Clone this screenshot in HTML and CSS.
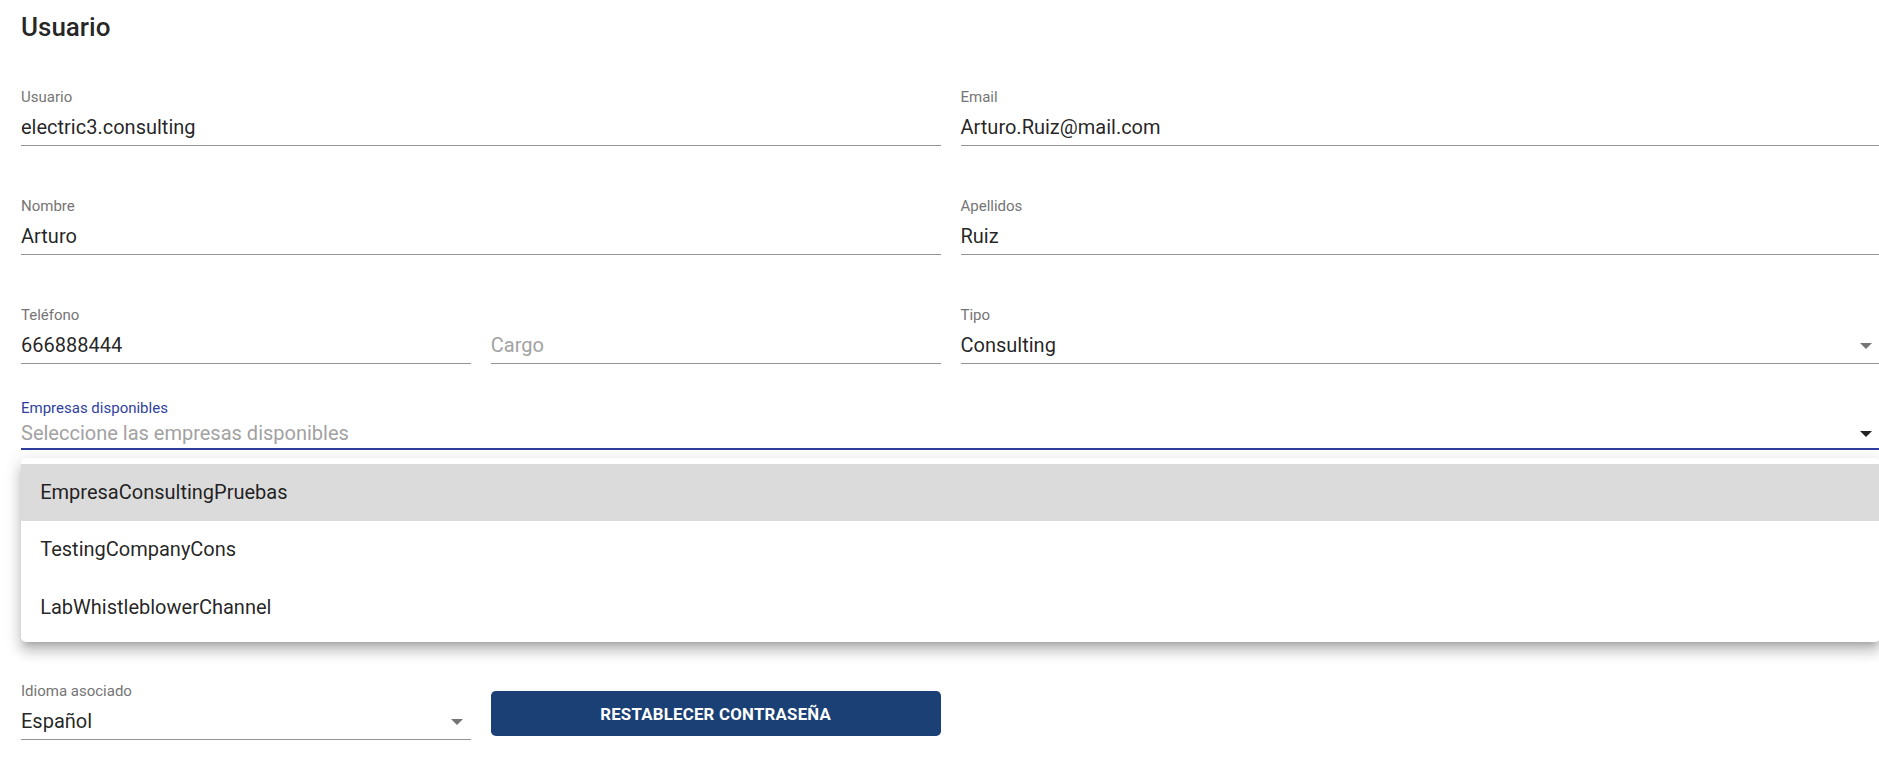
FILE: index.html
```html
<!DOCTYPE html>
<html lang="es">
<head>
<meta charset="UTF-8">
<meta name="viewport" content="width=device-width, initial-scale=1.0">
<title>Usuario</title>
<link rel="stylesheet" href="styles.css">
</head>
<body>
  <div class="page">
    <h2 class="title">Usuario</h2>
    <form class="form">
      <div class="row">
        <div class="field span-2">
          <label class="label">Usuario</label>
          <div class="input">electric3.consulting</div>
        </div>
        <div class="field span-2">
          <label class="label">Email</label>
          <div class="input">Arturo.Ruiz@mail.com</div>
        </div>
      </div>

      <div class="row">
        <div class="field span-2">
          <label class="label">Nombre</label>
          <div class="input">Arturo</div>
        </div>
        <div class="field span-2">
          <label class="label">Apellidos</label>
          <div class="input">Ruiz</div>
        </div>
      </div>

      <div class="row">
        <div class="field">
          <label class="label">Teléfono</label>
          <div class="input">666888444</div>
        </div>
        <div class="field">
          <label class="label">&nbsp;</label>
          <div class="input placeholder">Cargo</div>
        </div>
        <div class="field span-2">
          <label class="label">Tipo</label>
          <div class="input select">Consulting<span class="arrow"></span></div>
        </div>
      </div>

      <div class="row row-empresas">
        <div class="field span-4 focused">
          <label class="label">Empresas disponibles</label>
          <div class="input select placeholder">Seleccione las empresas disponibles<span class="arrow"></span></div>
          <ul class="menu">
            <li class="menu-item selected">EmpresaConsultingPruebas</li>
            <li class="menu-item">TestingCompanyCons</li>
            <li class="menu-item">LabWhistleblowerChannel</li>
          </ul>
        </div>
      </div>

      <div class="row row-last">
        <div class="field">
          <label class="label">Idioma asociado</label>
          <div class="input select">Español<span class="arrow"></span></div>
        </div>
        <button type="button" class="btn">Restablecer contraseña</button>
      </div>
    </form>
  </div>
</body>
</html>
```

FILE: styles.css
```css
html, body {
  margin: 0;
  padding: 0;
  overflow: hidden;
  background-color: #fff;
}
body {
  font-family: Roboto, "Noto Sans", Arial, sans-serif;
  color: rgba(0, 0, 0, 0.87);
}
.page {
  width: 1859px;
  padding: 13px 0 0 21px;
}
.title {
  margin: 0;
  font-size: 26px;
  font-weight: 500;
  line-height: 29px;
}
.form {
  display: flex;
  flex-direction: column;
  margin-top: 48px;
}
.row {
  display: grid;
  grid-template-columns: repeat(4, 1fr);
  column-gap: 20px;
  margin-bottom: 53px;
}
.row-empresas {
  margin-top: -16.5px;
  margin-bottom: 234.5px;
}
.row-last {
  margin-bottom: 0;
  align-items: start;
}
.span-2 {
  grid-column: span 2;
}
.span-4 {
  grid-column: span 4;
}
.field {
  display: flex;
  flex-direction: column;
  position: relative;
}
.label {
  font-size: 15px;
  line-height: 14.4px;
  color: #757575;
}
.input {
  position: relative;
  margin-top: 4px;
  padding: 7.3px 0 6.5px;
  font-size: 20px;
  line-height: 22.8px;
  border-bottom: 1px solid #949494;
}
.placeholder {
  color: #a2a2a2;
}
.arrow {
  position: absolute;
  right: 8px;
  top: calc(50% - 2px);
  width: 0;
  height: 0;
  border-left: 6px solid transparent;
  border-right: 6px solid transparent;
  border-top: 6px solid #757575;
}

/* focused multi select */
.focused .label {
  color: #303f9f;
}
.focused .input {
  margin-top: 2px;
  padding: 4.7px 0 3.5px;
  border-bottom: 2px solid #303f9f;
}
.focused .arrow {
  top: calc(50% - 1px);
  border-top-color: #222;
}
.menu {
  position: absolute;
  top: calc(100% + 8px);
  left: 0;
  right: 0;
  margin: 0;
  padding: 6px 0 5px;
  list-style: none;
  background-color: #fff;
  border-radius: 4.8px;
  box-shadow: 0 6px 6px -4px rgba(0, 0, 0, 0.2), 0 10px 12px 1px rgba(0, 0, 0, 0.14), 0 4px 17px 2px rgba(0, 0, 0, 0.12);
  z-index: 10;
}
.menu-item {
  height: 57.6px;
  line-height: 57.6px;
  padding: 0 19.2px;
  font-size: 20px;
}
.menu-item.selected {
  background-color: #dbdbdb;
}
.btn {
  margin-top: 7px;
  height: 45px;
  border: none;
  border-radius: 4.8px;
  background-color: #1b4075;
  color: #fff;
  font-family: Roboto, Arial, sans-serif;
  font-size: 16.8px;
  font-weight: 700;
  letter-spacing: 0.25px;
  text-transform: uppercase;
  cursor: pointer;
}
```
